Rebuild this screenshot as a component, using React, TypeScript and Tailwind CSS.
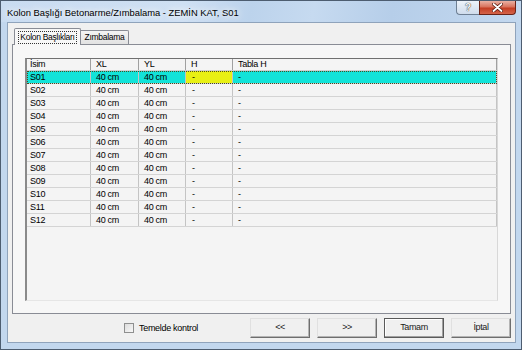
import React from "react";

const F = "font-['Liberation_Sans',sans-serif]";

const rows = ["S01","S02","S03","S04","S05","S06","S07","S08","S09","S10","S11","S12"];

function Btn({ label, def }: { label: string; def?: boolean }) {
  return (
    <div
      className={
        "w-[60px] h-[20px] flex items-center justify-center text-[9px] tracking-[-0.4px] text-[#1a1a1a] bg-[#f0f0f0] " +
        (def
          ? "border border-[#5a5a5a] shadow-[inset_-1px_-1px_0_#a0a0a0,inset_1px_1px_0_#ffffff]"
          : "border border-t-[#e0e0e0] border-l-[#e0e0e0] border-r-[#6e6e6e] border-b-[#6e6e6e] shadow-[inset_-1px_-1px_0_#b4b4b4]")
      }
    >
      {label}
    </div>
  );
}

export default function App() {
  return (
    <div className={"w-[522px] h-[350px] overflow-hidden bg-[#c2d7ee] border border-[#4d5d70] flex flex-col " + F}>
      {/* title bar */}
      <div className="h-[21px] flex items-start bg-[linear-gradient(100deg,#c9dcf1_0%,#cfe0f3_35%,#bcd3ec_48%,#c6daf0_60%,#b6cee9_75%,#c3d8ef_100%)]">
        <span className="ml-[6px] mt-[6px] text-[9.4px] leading-[12px] text-black [text-shadow:0_0_6px_#ffffff,0_0_10px_#ffffff]">
          Kolon Başlığı Betonarme/Zımbalama - ZEMİN KAT, S01
        </span>
        <div className="ml-auto mr-[5px] flex h-[14px]">
          <div className="w-[23px] h-[14px] flex items-center justify-center border border-t-0 border-r-0 border-[#6e7f93] rounded-bl-[4px] bg-[linear-gradient(#edf3fa,#cfdcec)]">
            <span className="text-[10px] leading-[10px] font-bold text-[#f7f7f7] [text-shadow:0_0_1px_#444,0_0_1px_#444]">?</span>
          </div>
          <div className="w-[37px] h-[14px] flex items-center justify-center border border-t-0 border-[#6b2317] rounded-br-[4px] bg-[linear-gradient(#eab1a4_0%,#d9735d_45%,#c43e24_55%,#d4644a_100%)]">
            <svg width="11" height="9" viewBox="0 0 11 9">
              <path d="M1.5 1 L9.5 8 M9.5 1 L1.5 8" stroke="#5a1b10" strokeWidth="3.4" strokeLinecap="round" />
              <path d="M1.5 1 L9.5 8 M9.5 1 L1.5 8" stroke="#ffffff" strokeWidth="1.8" strokeLinecap="round" />
            </svg>
          </div>
        </div>
      </div>

      {/* middle */}
      <div className="flex h-[321px]">
        <div className="w-[6px] shrink-0" />
        {/* client */}
        <div className="w-[509px] h-[321px] shrink-0 border border-[#8fa3bb] bg-[#f0f0f0] flex flex-col">
          <div className="pt-[5px] px-[4px] flex flex-col">
            {/* tab strip */}
            <div className="h-[16px] flex items-end pl-[2px]">
              <div className="relative z-10 -mb-px w-[67px] h-[17px] border border-b-0 border-[#898c95] rounded-t-[2px] bg-[#f7f7f7] flex items-center justify-center">
                <div className="border border-dotted border-[#333] h-[13px] px-[1px] flex items-center whitespace-nowrap text-[8.5px] tracking-[-0.3px] leading-[11px] text-black">
                  Kolon Başlıkları
                </div>
              </div>
              <div className="w-[48px] h-[14px] border border-l-0 border-b-0 border-[#898c95] rounded-tr-[2px] bg-[linear-gradient(#f4f4f4,#e2e2e2)] flex items-center justify-center whitespace-nowrap text-[8.5px] tracking-[-0.3px] leading-[11px] text-black">
                Zımbalama
              </div>
            </div>
            {/* panel */}
            <div className="w-[499px] h-[270px] border border-[#898c95] bg-[#f7f7f7] pt-[13px] pl-[12px]">
              {/* grid */}
              <div className="w-[473px] h-[243px] border-l-2 border-t border-l-[#8a8a8a] border-t-[#707070] border-r border-b border-r-[#d8d8d8] border-b-[#e6e6e6] bg-[#f4f4f4] text-[9px] tracking-[-0.3px] leading-[13px] text-black">
                {/* header */}
                <div className="flex h-[12px] border-b border-[#cfcfcf] bg-[#f4f4f4] leading-[11px]">
                  <div className="w-[64px] pl-[3px] border-r border-[#a0a0a0]">İsim</div>
                  <div className="w-[48px] pl-[5px] border-r border-[#a0a0a0]">XL</div>
                  <div className="w-[47px] pl-[5px] border-r border-[#a0a0a0]">YL</div>
                  <div className="w-[47px] pl-[5px] border-r border-[#a0a0a0]">H</div>
                  <div className="w-[264px] pl-[5px] border-r border-[#a0a0a0]">Tabla H</div>
                </div>
                {rows.map((r, i) => {
                  const sel = i === 0;
                  return (
                    <div
                      key={r}
                      className={
                        "flex h-[13px] border-b " +
                        (sel ? "bg-[#12e3d9] border-[#d0d0d0] outline outline-1 outline-dotted outline-offset-[-1px] outline-[#4a4a20]" : "border-[#d4d4d4]")
                      }
                    >
                      <div className="w-[64px] pl-[3px] border-r border-[#c4c4c4]">{r}</div>
                      <div className="w-[48px] pl-[5px] border-r border-[#c4c4c4]">40 cm</div>
                      <div className="w-[47px] pl-[5px] border-r border-[#c4c4c4]">40 cm</div>
                      <div className={"w-[47px] pl-[6px] border-r border-[#c4c4c4] " + (sel ? "bg-[#e8f014]" : "")}>-</div>
                      <div className="w-[264px] pl-[5px] border-r border-[#c4c4c4]">-</div>
                    </div>
                  );
                })}
              </div>
            </div>
          </div>
          {/* bottom row */}
          <div className="flex items-center h-[28px] px-[4px]">
            <div className="ml-[112px] flex items-center">
              <div className="w-[10px] h-[10px] border border-[#8e8f8f] bg-[linear-gradient(135deg,#dcdcdc,#f8f8f8)]" />
              <span className="ml-[5px] text-[9px] tracking-[-0.3px] leading-[12px] text-black">Temelde kontrol</span>
            </div>
            <div className="ml-auto flex gap-[7px]">
              <Btn label="<<" />
              <Btn label=">>" />
              <Btn label="Tamam" def />
              <Btn label="İptal" />
            </div>
          </div>
        </div>
        <div className="w-[5px] shrink-0" />
      </div>
      <div className="h-[6px]" />
    </div>
  );
}
